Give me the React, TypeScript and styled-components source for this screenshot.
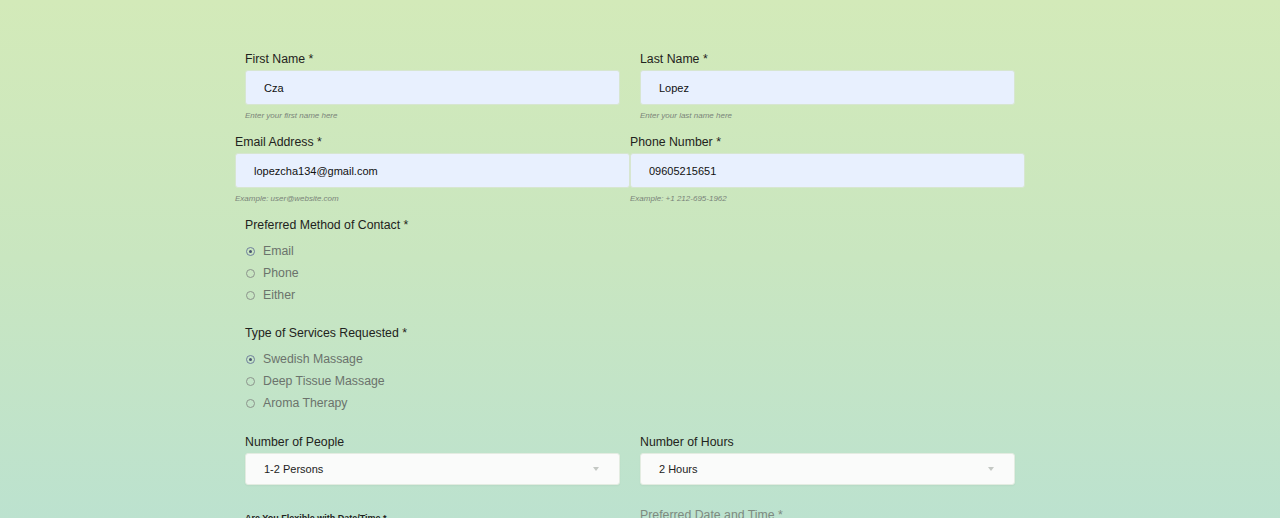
import React from 'react';
import styled, { createGlobalStyle } from 'styled-components';

const GlobalStyle = createGlobalStyle`
  html, body {
    margin: 0;
    padding: 0;
  }
  body {
    font-family: "Liberation Sans", Arial, sans-serif;
    background: linear-gradient(180deg, #d3eab9 0%, #c9e6c0 50%, #bce2cf 100%);
    min-height: 518px;
    overflow: hidden;
  }
`;

const Page = styled.div`
  height: 518px;
  padding: 51px 20px 0 0;
  box-sizing: border-box;
  display: flex;
  justify-content: center;
`;

const Form = styled.form`
  width: 770px;
  display: flex;
  flex-direction: column;
`;

const Row = styled.div<{ wide?: boolean }>`
  display: grid;
  grid-template-columns: 1fr 1fr;
  column-gap: ${p => (p.wide ? '0' : '20px')};
  margin: ${p => (p.wide ? '0 -10px' : '0')};
  margin-bottom: 13px;
`;

const Field = styled.div`
  display: flex;
  flex-direction: column;
`;

const Label = styled.label<{ muted?: boolean }>`
  font-size: 12.3px;
  line-height: 16px;
  color: ${p => (p.muted ? '#7d8a80' : '#1f2320')};
  margin-bottom: 3px;
`;

const Input = styled.input`
  height: 35px;
  box-sizing: border-box;
  border: 1px solid #d7e6d0;
  border-radius: 3px;
  background: #e8f0fe;
  padding: 0 18px;
  font-family: inherit;
  font-size: 11px;
  color: #111;
  outline: none;
`;

const Hint = styled.span`
  margin-top: 6px;
  font-size: 8px;
  line-height: 10px;
  font-style: italic;
  color: #7a847a;
`;

const Group = styled.div<{ gapAfter: number }>`
  display: flex;
  flex-direction: column;
  margin-bottom: ${p => p.gapAfter}px;
`;

const Options = styled.div`
  display: flex;
  flex-direction: column;
  margin-top: 4px;
`;

const Option = styled.label`
  display: flex;
  align-items: center;
  height: 22px;
  font-size: 12.3px;
  color: #6b736c;
`;

const Circle = styled.span<{ checked?: boolean }>`
  width: 9px;
  height: 9px;
  box-sizing: border-box;
  border-radius: 50%;
  border: 1px solid ${p => (p.checked ? '#6f7f9c' : '#8c948c')};
  margin: 0 8px 0 1px;
  display: flex;
  align-items: center;
  justify-content: center;

  &::after {
    content: '';
    width: 3px;
    height: 3px;
    border-radius: 50%;
    background: ${p => (p.checked ? '#4a5670' : 'transparent')};
  }
`;

const SelectBox = styled.div`
  position: relative;
  height: 32px;
  box-sizing: border-box;
  background: #fafbfa;
  border: 1px solid #e3ece1;
  border-radius: 3px;
  box-shadow: 0 1px 2px rgba(0, 0, 0, 0.04);
  display: flex;
  align-items: center;
  padding: 0 18px;
  font-size: 11px;
  color: #222;
`;

const Arrow = styled.span`
  position: absolute;
  right: 20px;
  top: 13px;
  width: 0;
  height: 0;
  border-left: 3px solid transparent;
  border-right: 3px solid transparent;
  border-top: 4px solid #c4c8c4;
`;

const SmallBold = styled.label`
  font-size: 9px;
  font-weight: 700;
  color: #1f2320;
  line-height: 16px;
`;

const BottomRow = styled.div`
  display: grid;
  grid-template-columns: 1fr 1fr;
  column-gap: 20px;
  margin-top: 22px;
  align-items: end;
`;

type RadioGroupProps = { title: string; options: string[]; selected: number; gapAfter: number };

const RadioGroup: React.FC<RadioGroupProps> = ({ title, options, selected, gapAfter }) => (
  <Group gapAfter={gapAfter}>
    <Label>{title}</Label>
    <Options>
      {options.map((o, i) => (
        <Option key={o}>
          <Circle checked={i === selected} />
          {o}
        </Option>
      ))}
    </Options>
  </Group>
);

const App: React.FC = () => {
  return (
    <>
      <GlobalStyle />
      <Page>
        <Form>
          <Row>
            <Field>
              <Label>First Name *</Label>
              <Input defaultValue="Cza" />
              <Hint>Enter your first name here</Hint>
            </Field>
            <Field>
              <Label>Last Name *</Label>
              <Input defaultValue="Lopez" />
              <Hint>Enter your last name here</Hint>
            </Field>
          </Row>

          <Row wide>
            <Field>
              <Label>Email Address *</Label>
              <Input defaultValue="lopezcha134@gmail.com" />
              <Hint>Example: user@website.com</Hint>
            </Field>
            <Field>
              <Label>Phone Number *</Label>
              <Input defaultValue="09605215651" />
              <Hint>Example: +1 212-695-1962</Hint>
            </Field>
          </Row>

          <RadioGroup
            title="Preferred Method of Contact *"
            options={['Email', 'Phone', 'Either']}
            selected={0}
            gapAfter={19}
          />

          <RadioGroup
            title="Type of Services Requested *"
            options={['Swedish Massage', 'Deep Tissue Massage', 'Aroma Therapy']}
            selected={0}
            gapAfter={20}
          />

          <Row style={{ marginBottom: 0 }}>
            <Field>
              <Label>Number of People</Label>
              <SelectBox>
                1-2 Persons
                <Arrow />
              </SelectBox>
            </Field>
            <Field>
              <Label>Number of Hours</Label>
              <SelectBox>
                2 Hours
                <Arrow />
              </SelectBox>
            </Field>
          </Row>

          <BottomRow>
            <SmallBold>Are You Flexible with Date/Time *</SmallBold>
            <Label muted>Preferred Date and Time *</Label>
          </BottomRow>
        </Form>
      </Page>
    </>
  );
};

export default App;
